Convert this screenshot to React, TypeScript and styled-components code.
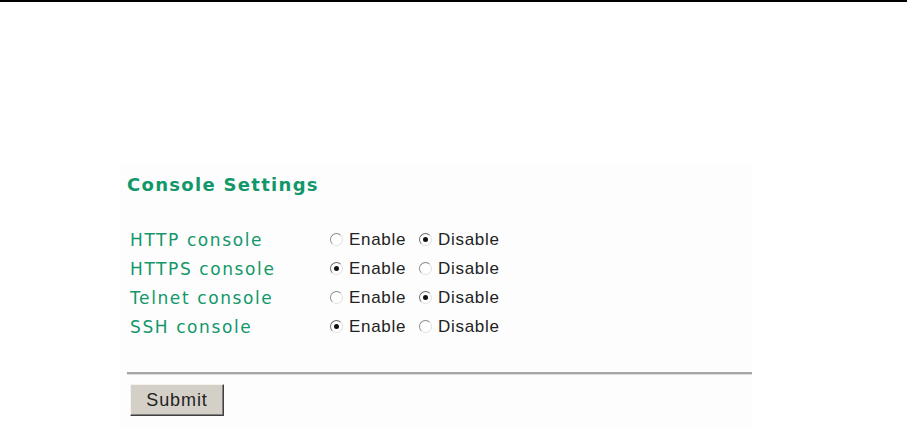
import styled, { createGlobalStyle } from 'styled-components';

const GlobalStyle = createGlobalStyle`
  html, body {
    margin: 0;
    padding: 0;
    background: #ffffff;
  }
  body {
    height: 429px;
    overflow: hidden;
  }
`;

const consoles = [
  { name: 'HTTP console', enabled: false },
  { name: 'HTTPS console', enabled: true },
  { name: 'Telnet console', enabled: false },
  { name: 'SSH console', enabled: true },
];

export default function App(): JSX.Element {
  return (
    <>
      <GlobalStyle />
      <Page>
        <TopRule />
        <Panel>
          <Title>Console Settings</Title>
          <SettingsTable>
            {consoles.map((c) => (
              <Row key={c.name}>
                <Label>{c.name}</Label>
                <Options>
                  <Option>
                    <Radio checked={c.enabled} />
                    <OptionText>Enable</OptionText>
                  </Option>
                  <Option>
                    <Radio checked={!c.enabled} />
                    <OptionText>Disable</OptionText>
                  </Option>
                </Options>
              </Row>
            ))}
          </SettingsTable>
          <Divider />
          <SubmitButton type="button">Submit</SubmitButton>
        </Panel>
      </Page>
    </>
  );
}

const Page = styled.div`
  display: flex;
  flex-direction: column;
  height: 429px;
`;

const TopRule = styled.div`
  height: 2px;
  width: 907px;
  background: #000;
`;

const Panel = styled.div`
  flex: 1;
  margin: 161px 0 0 120px;
  width: 632px;
  background: #fdfdfd;
  padding: 11px 0 0 7px;
  box-sizing: border-box;
`;

const Title = styled.h3`
  margin: 0;
  font-family: 'DejaVu Sans', Verdana, sans-serif;
  font-weight: bold;
  font-size: 18px;
  letter-spacing: 1.3px;
  line-height: 22px;
  color: #12976a;
`;

const SettingsTable = styled.div`
  display: flex;
  flex-direction: column;
  margin-top: 29px;
  padding-left: 3px;
`;

const Row = styled.div`
  display: grid;
  grid-template-columns: 200px auto;
  align-items: center;
  height: 29px;
`;

const Label = styled.span`
  font-family: 'DejaVu Sans', Verdana, sans-serif;
  font-size: 17px;
  letter-spacing: 1.6px;
  color: #12976a;
`;

const Options = styled.div`
  display: grid;
  grid-template-columns: 89px auto;
  align-items: center;
`;

const Option = styled.label`
  display: flex;
  align-items: center;
  gap: 6px;
`;

const Radio = styled.span<{ checked: boolean }>`
  position: relative;
  width: 11px;
  height: 11px;
  border-radius: 50%;
  border: 1px solid ${(p) => (p.checked ? '#8a8a8a' : '#a9a9a9')};
  border-top-color: ${(p) => (p.checked ? '#6e6e6e' : '#8c8c8c')};
  border-left-color: ${(p) => (p.checked ? '#6e6e6e' : '#8c8c8c')};
  border-bottom-color: #e0e0e0;
  border-right-color: #e0e0e0;
  background: #fff;

  &::after {
    content: '';
    display: ${(p) => (p.checked ? 'block' : 'none')};
    position: absolute;
    left: 3px;
    top: 3px;
    width: 5px;
    height: 5px;
    border-radius: 50%;
    background: #111;
  }
`;

const OptionText = styled.span`
  font-family: 'Liberation Sans', Arial, sans-serif;
  font-size: 17px;
  letter-spacing: 0.7px;
  color: #222;
`;

const Divider = styled.div`
  margin-top: 31px;
  width: 625px;
  height: 2px;
  background: #a6a6a6;
  border-bottom: 1px solid #dcdcdc;
`;

const SubmitButton = styled.button`
  display: block;
  margin: 9px 0 0 3px;
  width: 94px;
  height: 32px;
  padding: 0;
  background: #d4d0c8;
  border: 1px solid;
  border-color: #f4f2ee #404040 #404040 #f4f2ee;
  box-shadow: inset -1px -1px 0 #808080;
  font-family: 'Liberation Sans', Arial, sans-serif;
  font-size: 18px;
  letter-spacing: 0.9px;
  color: #222;
`;
